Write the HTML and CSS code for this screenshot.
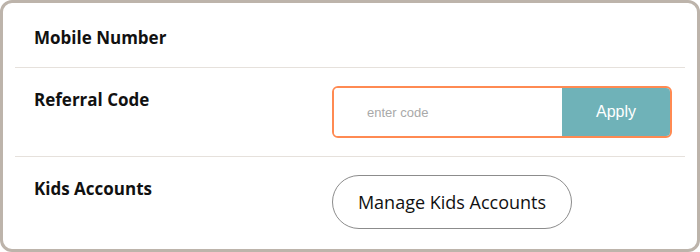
FILE: index.html
```html
<!DOCTYPE html>
<html>
<head>
<meta charset="utf-8">
<link rel="stylesheet" href="styles.css">
</head>
<body>
<div class="card">
  <div class="row row-first">
    <div class="label">Mobile Number</div>
  </div>
  <div class="row">
    <div class="label">Referral Code</div>
    <div class="code-box">
      <input class="code-input" type="text" placeholder="enter code">
      <button class="apply-btn">Apply</button>
    </div>
  </div>
  <div class="row row-last">
    <div class="label">Kids Accounts</div>
    <button class="manage-btn">Manage Kids Accounts</button>
  </div>
</div>
</body>
</html>
```

FILE: styles.css
```css
html, body {
  margin: 0;
  padding: 0;
  background: #ffffff;
}
.card {
  box-sizing: border-box;
  width: 700px;
  height: 252px;
  border: 3px solid #bdb4ab;
  border-radius: 12px;
  background: #ffffff;
  padding: 0 12px;
  font-family: "Open Sans", "Noto Sans", sans-serif;
  color: #111111;
}
.row {
  display: flex;
  align-items: flex-start;
  padding: 18px 0 18px 19px;
  border-bottom: 1px solid #e6e1dc;
}
.row-first {
  padding-top: 21px;
  padding-bottom: 17px;
}
.row-last {
  border-bottom: none;
}
.label {
  width: 298px;
  flex: none;
  padding-top: 2px;
  font-size: 17px;
  font-weight: 700;
  line-height: 24px;
}
.code-box {
  box-sizing: border-box;
  display: flex;
  width: 340px;
  height: 52px;
  border: 2px solid #ff8a52;
  border-radius: 6px;
  overflow: hidden;
}
.code-input {
  flex: 1;
  min-width: 0;
  border: none;
  outline: none;
  padding: 0 0 0 33px;
  font-family: "Liberation Sans", Arial, sans-serif;
  font-size: 13px;
  color: #333333;
  background: #ffffff;
}
.code-input::placeholder {
  color: #a9a9a9;
}
.apply-btn {
  width: 108px;
  flex: none;
  border: none;
  background: #6fb2b8;
  color: #ffffff;
  font-family: "Liberation Sans", Arial, sans-serif;
  font-size: 16px;
  padding: 0;
}
.manage-btn {
  box-sizing: border-box;
  width: 240px;
  height: 54px;
  border: 1px solid #8c8c8c;
  border-radius: 27px;
  background: #ffffff;
  color: #111111;
  font-family: "Open Sans", "Noto Sans", sans-serif;
  font-size: 18px;
  padding: 0;
}
```
